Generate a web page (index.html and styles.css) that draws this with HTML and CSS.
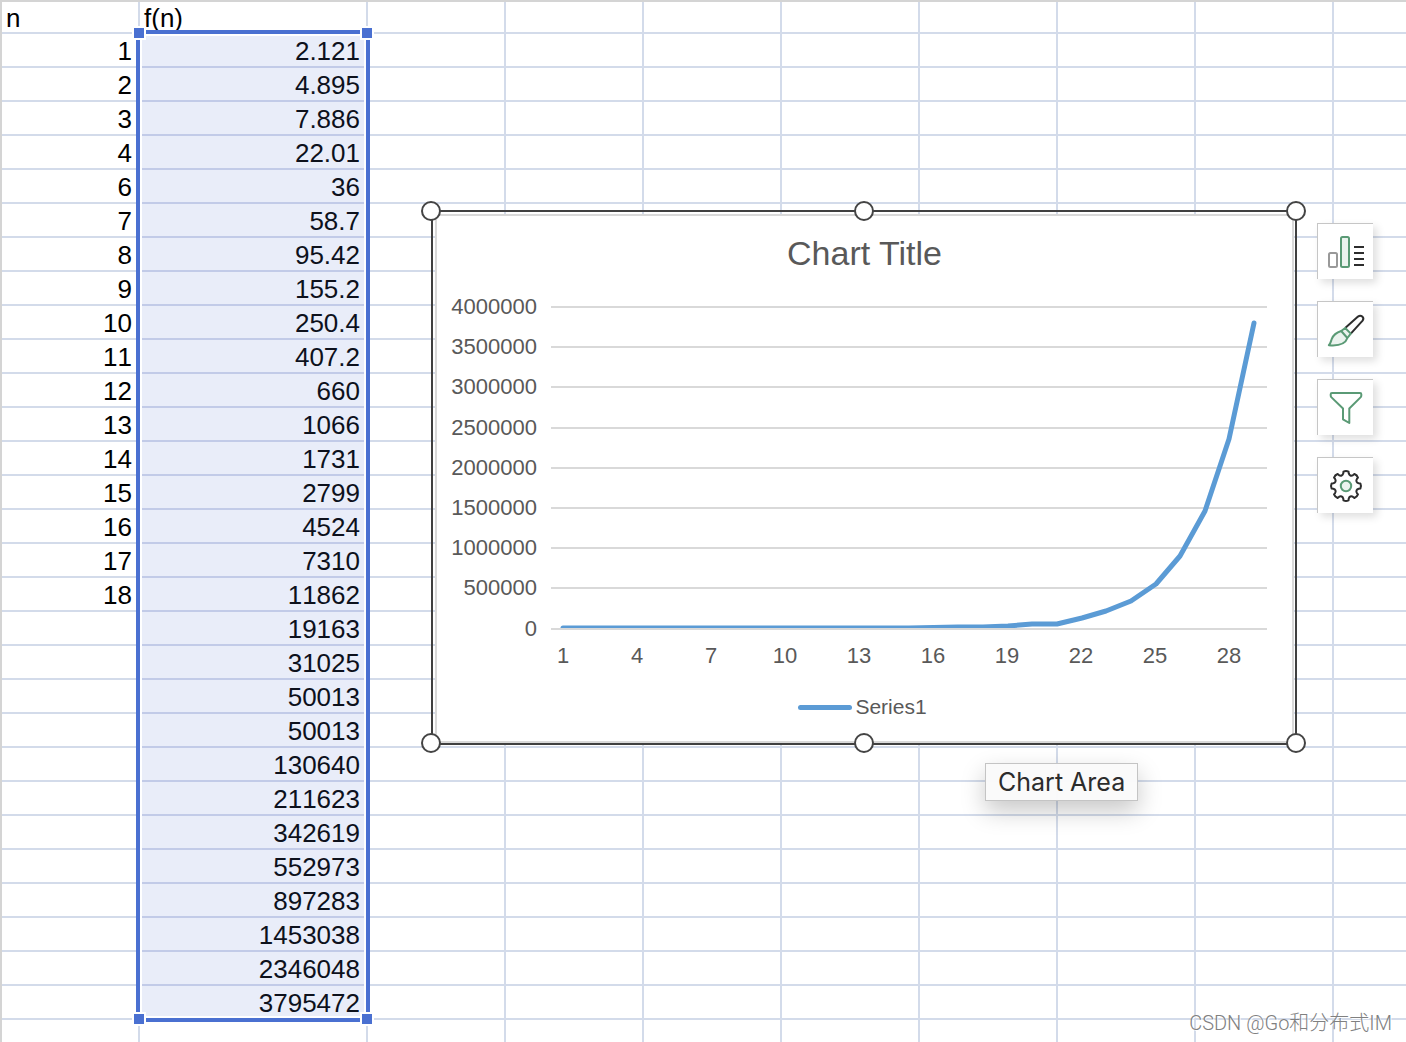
FILE: index.html
```html
<!DOCTYPE html>
<html lang="en">
<head>
<meta charset="utf-8">
<title>Spreadsheet</title>
<link rel="stylesheet" href="styles.css">
</head>
<body>
<main class="sheet">
  <table class="grid">
    <colgroup>
      <col class="col-n"><col class="col-f"><col class="col"><col class="col"><col class="col"><col class="col"><col class="col"><col class="col"><col class="col"><col>
    </colgroup>
    <thead>
      <tr><th scope="col">n</th><th scope="col">f(n)</th><td></td><td></td><td></td><td></td><td></td><td></td><td></td><td></td></tr>
    </thead>
    <tbody id="rows"></tbody>
  </table>

  <div class="selection">
    <span class="grip top left"></span><span class="grip top right"></span>
    <span class="grip bottom left"></span><span class="grip bottom right"></span>
  </div>

  <section class="chart-frame" aria-label="Chart">
    <figure class="chart">
      <figcaption class="chart-title">Chart Title</figcaption>
      <svg class="plot" viewBox="0 0 855 380" role="img" aria-label="Line chart of Series1">
        <defs><clipPath id="above-axis"><rect x="114" y="0" width="716" height="338"/></clipPath></defs>
        <path class="rule" d="M114 17H830M114 57H830M114 97H830M114 138H830M114 178H830M114 218H830M114 258H830M114 298H830M114 339H830"/>
        <g class="axis y-axis">
          <text x="100" y="24">4000000</text><text x="100" y="64">3500000</text><text x="100" y="104">3000000</text>
          <text x="100" y="145">2500000</text><text x="100" y="185">2000000</text><text x="100" y="225">1500000</text>
          <text x="100" y="265">1000000</text><text x="100" y="305">500000</text><text x="100" y="346">0</text>
        </g>
        <g class="axis x-axis">
          <text x="126" y="373">1</text><text x="200" y="373">4</text><text x="274" y="373">7</text><text x="348" y="373">10</text><text x="422" y="373">13</text>
          <text x="496" y="373">16</text><text x="570" y="373">19</text><text x="644" y="373">22</text><text x="718" y="373">25</text><text x="792" y="373">28</text>
        </g>
        <polyline class="series" clip-path="url(#above-axis)" points="126,338 472,338 521,337 546,337 571,336 595,334 620,334 645,328 669,321 694,311 719,294 743,266 768,221 792,149 817,33"/>
      </svg>
      <div class="legend"><span class="swatch"></span>Series1</div>
    </figure>
    <span class="knob n w"></span><span class="knob n c"></span><span class="knob n e"></span>
    <span class="knob s w"></span><span class="knob s c"></span><span class="knob s e"></span>
  </section>

  <div class="tools">
    <button type="button" class="tool" aria-label="Chart elements">
      <svg viewBox="0 0 56 56">
        <rect class="gray" x="12" y="30" width="8" height="14" rx="1.5"/>
        <rect class="green tint" x="24" y="14" width="8" height="30" rx="1.5"/>
        <path class="dark" d="M37 24H47M37 30H47M37 36H47M37 42H47"/>
      </svg>
    </button>
    <button type="button" class="tool" aria-label="Chart styles">
      <svg viewBox="0 0 56 56">
        <path class="dark" d="M28.2 27L41 15.6C44 13.2 47.8 16.6 45.6 19.6L33.8 32.6"/>
        <path class="green tint" d="M24.2 30L28.2 27L33.8 32.6L30.4 37C28.4 43 20.8 45 11.8 44.2C14 42 13.8 40.2 14.8 37.8C16.6 33.2 19.8 31.4 24.2 30Z"/>
        <path class="green" d="M24.2 30L30.4 37"/>
      </svg>
    </button>
    <button type="button" class="tool" aria-label="Chart filters">
      <svg viewBox="0 0 56 56">
        <path class="green" d="M15 14H43Q44.3 14 44.3 15.3V16.5Q44.3 17.6 43.5 18.4L32.3 29.5V44L26 40.3V29.5L14.5 18.4Q13.7 17.6 13.7 16.5V15.3Q13.7 14 15 14Z"/>
      </svg>
    </button>
    <button type="button" class="tool" aria-label="Format chart">
      <svg viewBox="0 0 56 56">
        <path class="dark" id="gear" d=""/>
        <circle class="green tint" cx="29" cy="29" r="5.2"/>
      </svg>
    </button>
  </div>

  <div class="tooltip" role="tooltip">Chart Area</div>
  <p class="watermark">CSDN @Go和分布式IM</p>
</main>
<script src="script.js"></script>
</body>
</html>
```
FILE: styles.css
```css
* { box-sizing: border-box; }
body {
  margin: 0;
  background: #fff;
  color: #000;
  font-family: "Liberation Sans", Arial, sans-serif;
  font-kerning: none;
}
.sheet {
  position: relative;
  height: 100vh;
  overflow: hidden;
  border-top: 2px solid #d4d4d4;
  border-left: 2px solid #d4d4d4;
}
.grid {
  width: 100%;
  table-layout: fixed;
  border-collapse: separate;
  border-spacing: 0;
  font-size: 26px;
  line-height: 30px;
}
.col-n, .col { width: 138px; }
.col-f { width: 228px; }
.grid th, .grid td {
  height: 34px;
  padding: 2px 6px 0 4px;
  border-right: 2px solid #d3dbea;
  border-bottom: 2px solid #d3dbea;
  text-align: right;
  font-weight: 400;
  white-space: nowrap;
}
.grid thead th, .grid thead td {
  height: 32px;
  padding-top: 2px;
  line-height: 28px;
  text-align: left;
}
.grid td:last-child { border-right: 0; }
.grid td.picked {
  background: #e9edf9;
  border-bottom-color: #c2cbe8;
  color: #0d111c;
}

.selection {
  position: absolute;
  left: 134px;
  top: 28px;
  width: 234px;
  height: 992px;
  border: 4px solid #4a70d1;
  box-shadow: inset 0 0 0 2px #fff;
}
.grip {
  position: absolute;
  width: 14px;
  height: 14px;
  border: 2px solid #fff;
  background: #4a70d1;
}
.grip.top { top: -8px; }
.grip.bottom { bottom: -8px; }
.grip.left { left: -8px; }
.grip.right { right: -8px; }

.chart-frame {
  position: absolute;
  left: 429px;
  top: 208px;
  width: 866px;
  padding: 2px 1px 0 2px;
  border: 2px solid #404040;
}
.chart {
  display: flex;
  flex-direction: column;
  align-items: center;
  margin: 0;
  padding: 17px 0 21px;
  border: 2px solid #d9d9d9;
  background: #fff;
  color: #595959;
  font-size: 22px;
}
.chart-title { font-size: 34px; line-height: 40px; font-kerning: normal; }
.plot { display: block; width: 100%; margin: 17px 0 24px; }
.rule { stroke: #d9d9d9; stroke-width: 2; fill: none; }
.axis { fill: #595959; font-size: 22px; }
.y-axis { text-anchor: end; }
.x-axis { text-anchor: middle; }
.series {
  fill: none;
  stroke: #5b9bd5;
  stroke-width: 5;
  stroke-linecap: round;
  stroke-linejoin: round;
}
.legend {
  display: flex;
  align-items: center;
  gap: 3px;
  padding-right: 4px;
  font-size: 21px;
  line-height: 26px;
}
.swatch { width: 54px; height: 5px; border-radius: 3px; background: #5b9bd5; }
.knob {
  position: absolute;
  width: 20px;
  height: 20px;
  margin: -10px;
  border: 2px solid #444;
  border-radius: 50%;
  background: #fff;
}
.knob.n { top: -1px; }
.knob.s { bottom: 0; }
.knob.w { left: -2px; }
.knob.c { left: 50%; }
.knob.e { right: -1px; }

.tools {
  position: absolute;
  left: 1315px;
  top: 221px;
  display: flex;
  flex-direction: column;
  gap: 22px;
}
.tool {
  width: 56px;
  height: 56px;
  padding: 0;
  border: 0;
  background: #fff;
  box-shadow: inset 1px 1px #c6c6c6, 4px 4px 8px rgba(0, 0, 0, .13);
}
.tool svg { display: block; width: 56px; height: 56px; fill: none; stroke-width: 2; stroke-linejoin: round; }
.gray { stroke: #999; }
.green { stroke: #5a9a75; }
.dark { stroke: #2d2d2d; }
.tint { fill: #ebf3ee; }

.tooltip {
  position: absolute;
  left: 983px;
  top: 761px;
  padding: 0 12px;
  border: 1px solid #c4c4c4;
  background: rgba(250, 250, 250, .96);
  box-shadow: 0 10px 24px rgba(0, 0, 0, .22);
  color: #2c2c2c;
  font: 25px/36px Inter, sans-serif;
}
.watermark {
  position: absolute;
  right: 14px;
  bottom: 6px;
  margin: 0;
  color: #808080;
  font: 300 20px/26px Roboto, "Noto Sans CJK SC", sans-serif;
  text-shadow: 1px 1px #fff;
}
```
FILE: script.js
```js
const n = [1, 2, 3, 4, 6, 7, 8, 9, 10, 11, 12, 13, 14, 15, 16, 17, 18];
const f = ["2.121", "4.895", "7.886", "22.01", "36", "58.7", "95.42", "155.2", "250.4", "407.2",
  "660", "1066", "1731", "2799", "4524", "7310", "11862", "19163", "31025", "50013", "50013",
  "130640", "211623", "342619", "552973", "897283", "1453038", "2346048", "3795472"];

const body = document.getElementById("rows");
for (let i = 0; i <= f.length; i++) {
  const row = body.insertRow();
  row.insertCell().textContent = n[i] ?? "";
  const value = row.insertCell();
  value.textContent = f[i] ?? "";
  if (i < f.length) value.className = "picked";
  for (let c = 0; c < 8; c++) row.insertCell();
}

// Eight-toothed gear outline around (29, 29).
const at = (r, deg) => {
  const a = deg * Math.PI / 180;
  return (29 + r * Math.cos(a)).toFixed(2) + " " + (29 + r * Math.sin(a)).toFixed(2);
};
let d = "";
for (let t = 0; t < 360; t += 45) {
  d += (t ? "L" : "M") + at(14.6, t - 10) + "Q" + at(15.6, t) + " " + at(14.6, t + 10) +
    "L" + at(13, t + 12) + "C" + at(11, t + 17) + " " + at(11, t + 28) + " " + at(13, t + 33);
}
document.getElementById("gear").setAttribute("d", d + "Z");
```
